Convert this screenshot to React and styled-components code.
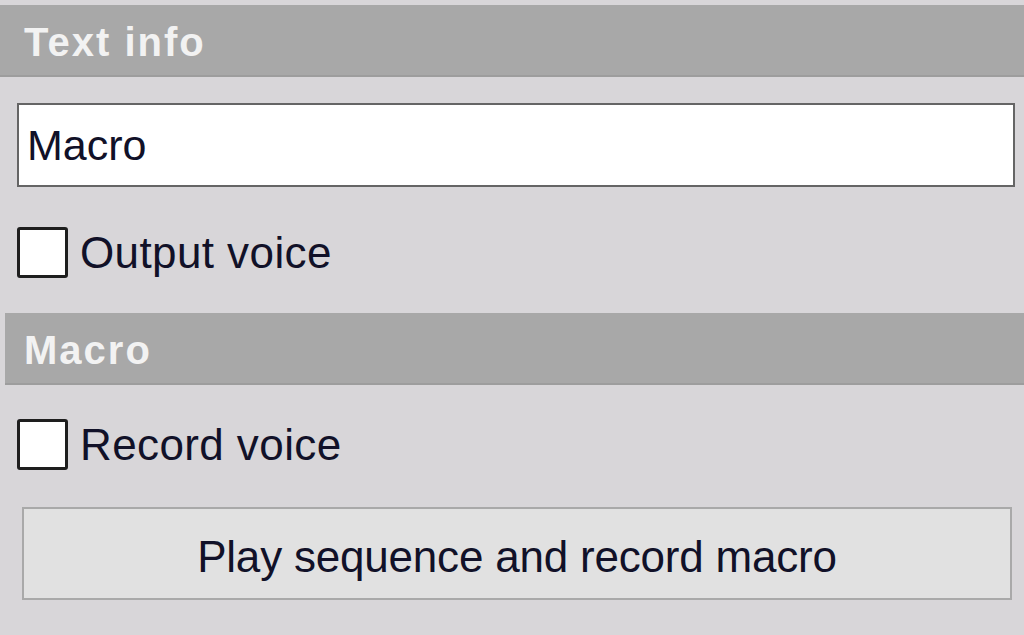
import React from "react";
import styled, { createGlobalStyle } from "styled-components";

const GlobalStyle = createGlobalStyle`
  html, body {
    margin: 0;
    padding: 0;
    background: #d8d6d9;
  }
  body {
    font-family: "Liberation Sans", Arial, sans-serif;
  }
`;

function App() {
  return (
    <>
      <GlobalStyle />
      <Panel>
        <SectionHeader>Text info</SectionHeader>
        <TextField defaultValue="Macro" />
        <CheckRow $top={40}>
          <Box type="checkbox" />
          <span>Output voice</span>
        </CheckRow>
        <SectionHeader $inset>Macro</SectionHeader>
        <CheckRow $top={34}>
          <Box type="checkbox" />
          <span>Record voice</span>
        </CheckRow>
        <Button>Play sequence and record macro</Button>
      </Panel>
    </>
  );
}

export default App;

const Panel = styled.div`
  width: 1024px;
  height: 635px;
  padding-top: 5px;
  box-sizing: border-box;
  background: #d8d6d9;
  display: flex;
  flex-direction: column;
  overflow: hidden;
`;

const SectionHeader = styled.div`
  height: 72px;
  box-sizing: border-box;
  margin-left: ${(p) => (p.$inset ? "5px" : "0")};
  margin-top: ${(p) => (p.$inset ? "35px" : "0")};
  padding-left: ${(p) => (p.$inset ? "19px" : "24px")};
  padding-top: 5px;
  background: #a8a8a8;
  border-bottom: 2px solid #9d9d9d;
  display: flex;
  align-items: center;
  color: #f2f2f2;
  font-weight: bold;
  font-size: 40px;
  letter-spacing: 2px;
`;

const TextField = styled.input`
  margin: 26px 9px 0 17px;
  height: 84px;
  box-sizing: border-box;
  border: 2px solid #656565;
  background: #fff;
  padding: 0 0 0 8px;
  font-family: "Liberation Sans", Arial, sans-serif;
  font-size: 43px;
  color: #111128;
  outline: none;
`;

const CheckRow = styled.label`
  display: flex;
  align-items: center;
  gap: 12px;
  margin-top: ${(p) => p.$top}px;
  margin-left: 17px;
  height: 51px;
  font-size: 44px;
  letter-spacing: 0.4px;
  color: #111128;
`;

const Box = styled.input`
  appearance: none;
  margin: 0;
  width: 51px;
  height: 51px;
  box-sizing: border-box;
  border: 3px solid #1e1e1e;
  border-radius: 3px;
  background: #fff;
`;

const Button = styled.button`
  margin: 37px 12px 0 22px;
  height: 93px;
  box-sizing: border-box;
  border: 2px solid #a9a9a9;
  background: #e1e1e1;
  font-family: "Liberation Sans", Arial, sans-serif;
  font-size: 44px;
  letter-spacing: -0.2px;
  color: #111128;
  padding: 6px 0 0 0;
`;
